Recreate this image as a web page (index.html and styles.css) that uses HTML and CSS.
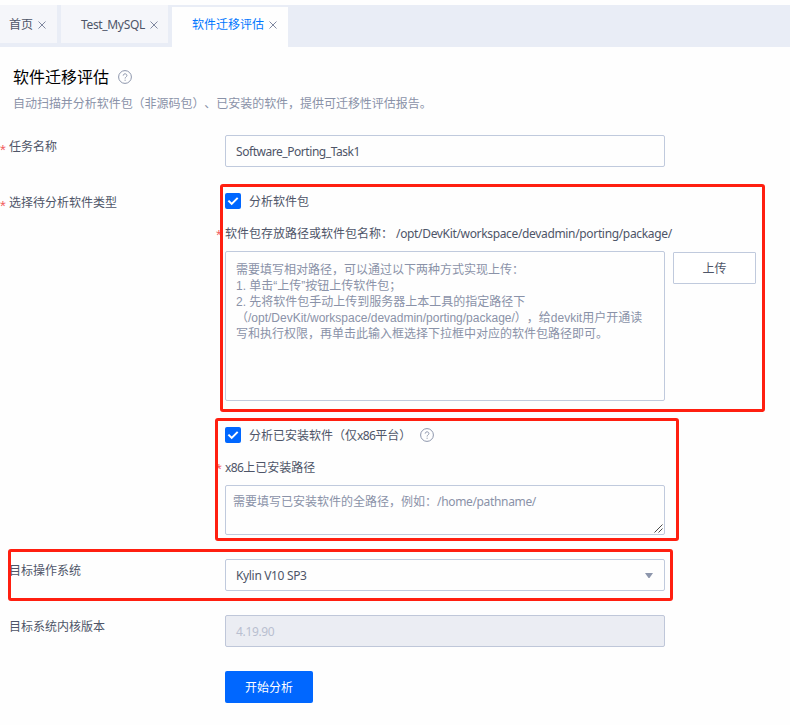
FILE: index.html
```html
<!DOCTYPE html>
<html lang="zh-CN">
<head>
<meta charset="utf-8">
<title>软件迁移评估</title>
<link rel="stylesheet" href="styles.css">
</head>
<body>
<nav class="tabs">
  <div class="tab tab-home"><span>首页</span><svg class="close" viewBox="0 0 8 8"><path d="M.5.5l7 7M7.5.5l-7 7"/></svg></div>
  <div class="tab tab-test"><span class="latin">Test_MySQL</span><svg class="close" viewBox="0 0 8 8"><path d="M.5.5l7 7M7.5.5l-7 7"/></svg></div>
  <div class="tab tab-active"><span>软件迁移评估</span><svg class="close" viewBox="0 0 8 8"><path d="M.5.5l7 7M7.5.5l-7 7"/></svg></div>
</nav>
<header class="heading">
  <div class="title-row"><h1>软件迁移评估</h1><svg class="help" viewBox="0 0 14 14"><circle cx="7" cy="7" r="6.4"/><path d="M5.2 5.6c0-2.4 3.7-2.3 3.7-.1 0 1.4-1.8 1.5-1.8 3M7.1 9.7v1.1"/></svg></div>
  <p>自动扫描并分析软件包（非源码包）、已安装的软件，提供可迁移性评估报告。</p>
</header>
<main class="form">
  <div class="row row-name">
    <label class="label required">任务名称</label>
    <div class="input"><span class="latin task">Software_Porting_Task1</span></div>
  </div>
  <div class="row row-type">
    <label class="label required">选择待分析软件类型</label>
    <div class="content">
      <div class="check-row"><span class="checkbox"><svg viewBox="0 0 16 16"><path d="M3.4 7.6l3.3 3.3 6-6"/></svg></span><span class="check-text">分析软件包</span></div>
      <div class="sub-label required"><span>软件包存放路径或软件包名称：</span><span class="latin path">/opt/DevKit/workspace/devadmin/porting/package/</span></div>
      <div class="upload-row">
        <div class="area area-package">需要填写相对路径，可以通过以下两种方式实现上传：<br>1. 单击“上传”按钮上传软件包；<br>2. 先将软件包手动上传到服务器上本工具的指定路径下<br>（/opt/DevKit/workspace/devadmin/porting/package/），给devkit用户开通读<br>写和执行权限，再单击此输入框选择下拉框中对应的软件包路径即可。</div>
        <button class="upload">上传</button>
      </div>
      <div class="check-row check-installed"><span class="checkbox"><svg viewBox="0 0 16 16"><path d="M3.4 7.6l3.3 3.3 6-6"/></svg></span><span class="check-text">分析已安装软件（仅<span class="x86">x86</span>平台）</span><svg class="help" viewBox="0 0 14 14"><circle cx="7" cy="7" r="6.4"/><path d="M5.2 5.6c0-2.4 3.7-2.3 3.7-.1 0 1.4-1.8 1.5-1.8 3M7.1 9.7v1.1"/></svg></div>
      <div class="sub-label required"><span><span class="x86">x86</span>上已安装路径</span></div>
      <div class="area area-installed"><span>需要填写已安装软件的全路径，例如：</span><span class="latin">/home/pathname/</span><svg class="grip" viewBox="0 0 9 9"><path d="M.5 8.5l8-8M4.5 8.5l4-4"/></svg></div>
    </div>
  </div>
  <div class="row">
    <label class="label">目标操作系统</label>
    <div class="input select"><span class="latin">Kylin V10 SP3</span><svg class="arrow" viewBox="0 0 8 5"><path d="M0 0h8L4.5 5h-1z"/></svg></div>
  </div>
  <div class="row">
    <label class="label">目标系统内核版本</label>
    <div class="input disabled"><span class="latin">4.19.90</span></div>
  </div>
  <button class="submit">开始分析</button>
</main>
<div class="frame frame-package"></div>
<div class="frame frame-installed"></div>
<div class="frame frame-os"></div>
</body>
</html>
```
FILE: styles.css
```css
* { box-sizing: border-box; }
body {
  margin: 0;
  position: relative;
  width: 790px;
  height: 725px;
  overflow: hidden;
  padding-top: 5px;
  background: #fefefe;
  color: #4e5568;
  font: 12px/16px "Noto Sans", "Noto Sans CJK SC", sans-serif;
  white-space: nowrap;
  text-spacing-trim: space-all;
}
.latin { letter-spacing: -0.34px; }
.task { letter-spacing: -0.45px; }
.x86 { letter-spacing: -0.6px; }
.tabs { display: flex; gap: 4px; height: 42px; background: #e9edf6; }
.tab { display: flex; align-items: center; gap: 5px; height: 38px; padding-top: 2px; background: #f5f6fa; }
.tab-home { width: 57px; padding-left: 9px; }
.tab-test { width: 107px; padding-left: 20px; }
.tab-active { width: 116px; height: 40px; margin-top: 2px; padding: 0 0 4px 20px; background: #fefefe; color: #0077ff; }
.close { width: 8px; height: 8px; fill: none; stroke: #8088a0; stroke-width: 1; }
.heading { padding: 19px 0 0 13px; }
.title-row { display: flex; align-items: center; gap: 9px; height: 22px; }
h1 { margin: 0; color: #000; font-size: 16px; line-height: 22px; font-weight: 400; }
.help { width: 14px; height: 14px; fill: none; stroke: #8d96ac; stroke-width: 1; }
.heading p { margin: 7px 0 0; color: #8a92a8; line-height: 18px; letter-spacing: -0.04px; }
.form { padding-top: 22px; }
.row { display: grid; grid-template-columns: 216px 1fr; padding-left: 9px; margin-bottom: 24px; }
.row-name { margin-bottom: 26px; }
.label { position: relative; height: 24px; line-height: 24px; }
.row-type .label { margin-top: -2px; }
.required::before { content: "*"; position: absolute; left: -9px; top: 3px; color: #f25d5d; font-family: "Liberation Sans", sans-serif; font-size: 15px; }
.input { display: flex; align-items: center; width: 440px; height: 32px; padding: 1px 11px 0 10px; border: 1px solid #c0cadd; border-radius: 2px; }
.select { justify-content: space-between; }
.arrow { width: 8px; height: 5px; fill: #8d96ac; }
.disabled { background: #ebedf3; color: #b9bfd0; border-color: #bfc7d9; }
.check-row { display: flex; align-items: center; gap: 8px; height: 16px; }
.check-text { padding-top: 2px; }
.checkbox { width: 16px; height: 16px; border-radius: 2px; background: #0067ff; }
.checkbox svg { display: block; fill: none; stroke: #fff; stroke-width: 2; }
.check-installed { margin-top: 26px; }
.check-installed .help { margin-left: 1px; }
.sub-label { position: relative; display: flex; height: 16px; margin: 17px 0 9px; }
.sub-label.required::before { top: 1px; }
.path { margin-left: 3px; }
.upload-row { display: flex; align-items: flex-start; gap: 8px; }
.area { position: relative; width: 440px; border: 1px solid #c0cadd; border-radius: 2px; color: #8a92a8; }
.area-package { height: 150px; padding: 10px; font-family: "Liberation Sans", "Noto Sans CJK SC", sans-serif; }
.area-installed { height: 50px; padding: 8px 7px; }
.grip { position: absolute; right: 1px; bottom: 1px; width: 9px; height: 9px; fill: none; stroke: #4a4a4a; stroke-width: 1; }
button { padding: 2px 0 0; font: inherit; }
.upload { width: 83px; height: 32px; margin-top: 1px; border: 1px solid #c0cadd; border-radius: 1px; background: #fff; color: #4e5568; }
.submit { display: block; width: 88px; height: 32px; margin-left: 225px; border: 0; border-radius: 2px; background: #0067ff; color: #fff; }
.frame { position: absolute; border: 3px solid #ff1f10; border-radius: 3px; }
.frame-package { left: 220px; top: 184px; width: 545px; height: 228px; }
.frame-installed { left: 215px; top: 418px; width: 464px; height: 123px; }
.frame-os { left: 8px; top: 549px; width: 665px; height: 52px; }
```
